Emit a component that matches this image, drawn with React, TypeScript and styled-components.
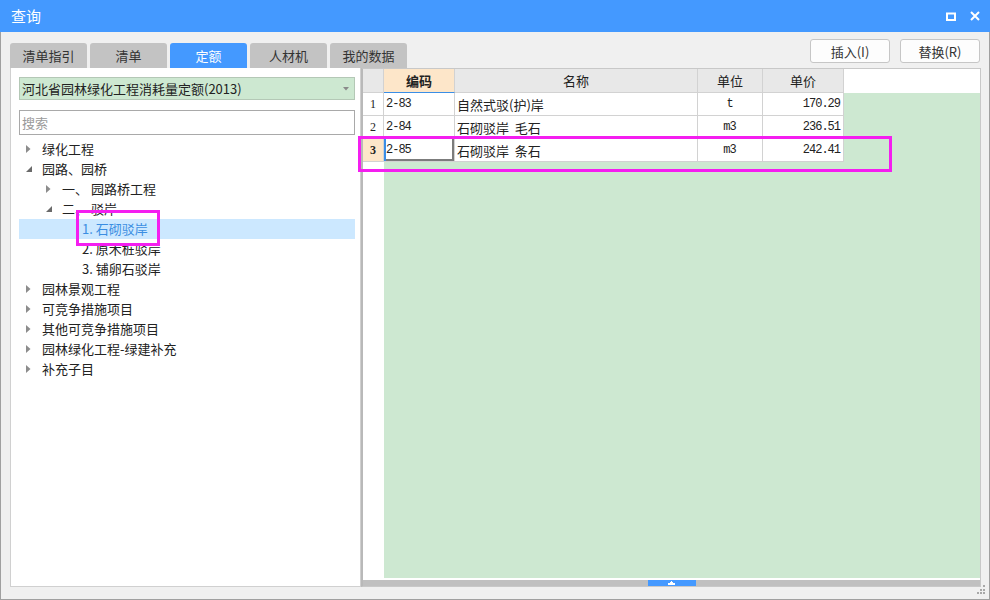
import React, { FC } from "react";
import styled, { createGlobalStyle, css } from "styled-components";

const GlobalStyle = createGlobalStyle`
  html, body {
    margin: 0;
    padding: 0;
    background: #ffffff;
  }
  * {
    box-sizing: border-box;
  }
`;

const uiFont = `"Noto Sans CJK SC", "Liberation Sans", sans-serif`;
const monoFont = `"Liberation Mono", "DejaVu Sans Mono", monospace`;

const BLUE = "#4499ff";
const GREEN = "#cde8d1";
const PEACH = "#fde6c9";
const GRID_LINE = "#d2d2d2";
const MAGENTA = "#f41ef0";

const Window = styled.div`
  position: relative;
  width: 990px;
  height: 600px;
  display: flex;
  flex-direction: column;
  background: #f0f0f0;
  border: 1px solid #a0a0a0;
  border-top: none;
  font-family: ${uiFont};
  color: #222;
`;

const TitleBar = styled.div`
  height: 32px;
  flex: none;
  display: flex;
  align-items: center;
  justify-content: space-between;
  background: ${BLUE};
  color: #fff;
  padding: 0 10px 0 11px;
  margin: 0 -1px;
`;

const Title = styled.div`
  font-size: 15px;
  line-height: 20px;
`;

const TitleButtons = styled.div`
  display: flex;
  align-items: center;
  gap: 14px;
`;

const Body = styled.div`
  flex: 1;
  display: flex;
  flex-direction: column;
  padding: 0 8px 12px 9px;
  min-height: 0;
`;

const TopRow = styled.div`
  height: 36px;
  flex: none;
  display: flex;
  justify-content: space-between;
`;

const Tabs = styled.div`
  display: flex;
  align-items: flex-end;
  gap: 3px;
`;

const Tab = styled.div<{ $active?: boolean }>`
  width: 77px;
  height: 25px;
  display: flex;
  align-items: center;
  justify-content: center;
  font-size: 13px;
  border-radius: 3px 3px 0 0;
  background: ${(p) => (p.$active ? BLUE : "#c3c3c3")};
  color: ${(p) => (p.$active ? "#fff" : "#333")};
`;

const Buttons = styled.div`
  display: flex;
  align-items: flex-end;
  gap: 10px;
  padding: 0 1px 5px 0;
`;

const Button = styled.div`
  width: 80px;
  height: 24px;
  display: flex;
  align-items: center;
  justify-content: center;
  font-size: 13px;
  color: #333;
  background: #fdfdfd;
  border: 1px solid #c6c6c6;
  border-radius: 3px;
`;

const Main = styled.div`
  flex: 1;
  display: flex;
  min-height: 0;
`;

const LeftPanel = styled.div`
  width: 351px;
  flex: none;
  display: flex;
  flex-direction: column;
  background: #fff;
  border: 1px solid #d0d0d0;
  border-top: none;
  padding: 9px 5px 0 8px;
`;

const Select = styled.div`
  height: 23px;
  display: flex;
  align-items: center;
  justify-content: space-between;
  background: ${GREEN};
  border: 1px solid #b4c8b6;
  padding: 0 5px 0 2px;
  font-size: 13px;
  line-height: 18px;
`;

const Search = styled.div`
  height: 25px;
  margin-top: 10px;
  display: flex;
  align-items: center;
  border: 1px solid #a9a9a9;
  padding-left: 2px;
  font-size: 13px;
  color: #9a9a9a;
`;

const Tree = styled.div`
  margin-top: 4px;
  display: flex;
  flex-direction: column;
`;

const TreeRow = styled.div<{ $level: number; $selected?: boolean }>`
  height: 20px;
  display: flex;
  align-items: center;
  padding-left: ${(p) => p.$level * 20}px;
  font-size: 13px;
  line-height: 18px;
  white-space: pre;
  ${(p) =>
    p.$selected &&
    css`
      background: #cce8ff;
      color: #3b8ee2;
    `}
`;

const Toggle = styled.span`
  width: 19px;
  height: 20px;
  flex: none;
  display: flex;
  align-items: center;
  justify-content: center;
`;

const TreeLabel = styled.span`
  margin-left: 4px;
`;

const RightPanel = styled.div`
  flex: 1;
  display: flex;
  flex-direction: column;
  background: #fff;
  border-top: 1px solid #c8c8c8;
  border-left: 2px solid #b9b9b9;
  border-right: 1px solid #c8c8c8;
  border-bottom: 1px solid #c8c8c8;
  min-width: 0;
`;

const GridArea = styled.div`
  flex: 1;
  display: flex;
  flex-direction: column;
  min-height: 0;
`;

const HeaderRow = styled.div`
  height: 24px;
  flex: none;
  display: flex;
`;

const DataRow = styled.div`
  height: 23px;
  flex: none;
  display: flex;
`;

const cellBase = css`
  flex: none;
  height: 100%;
  display: flex;
  align-items: center;
  border-right: 1px solid ${GRID_LINE};
  border-bottom: 1px solid ${GRID_LINE};
`;

const HeadCell = styled.div<{ $w: number; $key?: boolean }>`
  ${cellBase};
  width: ${(p) => p.$w}px;
  justify-content: center;
  font-size: 13px;
  background: ${(p) => (p.$key ? PEACH : "#e8e8e8")};
  font-weight: ${(p) => (p.$key ? 700 : 400)};
  color: #222;
  ${(p) =>
    p.$key &&
    css`
      border-bottom-color: #3a8ee6;
    `}
`;

const RowHead = styled.div<{ $current?: boolean }>`
  ${cellBase};
  width: 21px;
  justify-content: center;
  font-family: "Liberation Serif", serif;
  font-size: 12px;
  background: ${(p) => (p.$current ? PEACH : "#fff")};
  font-weight: ${(p) => (p.$current ? 700 : 400)};
`;

const Cell = styled.div<{ $w: number; $align?: "left" | "center" | "right"; $mono?: boolean; $focus?: boolean }>`
  ${cellBase};
  width: ${(p) => p.$w}px;
  padding: 0 3px 0 2px;
  white-space: pre;
  justify-content: ${(p) =>
    p.$align === "right" ? "flex-end" : p.$align === "center" ? "center" : "flex-start"};
  font-family: ${(p) => (p.$mono ? monoFont : uiFont)};
  font-size: ${(p) => (p.$mono ? "12px" : "13px")};
  letter-spacing: ${(p) => (p.$mono ? "-1px" : "0")};
  background: #fff;
  ${(p) =>
    p.$focus &&
    css`
      box-shadow: inset 2px 0 0 #3a8ee6, inset -2px -2px 0 #7c7c7c;
    `}
`;

const Fill = styled.div<{ $green?: boolean }>`
  flex: 1;
  height: 100%;
  background: ${(p) => (p.$green ? GREEN : "#fff")};
`;

const FillerRow = styled.div`
  flex: 1;
  display: flex;
  padding-bottom: 2px;
`;

const Stub = styled.div`
  width: 21px;
  flex: none;
`;

const ScrollBar = styled.div`
  height: 6px;
  flex: none;
  display: flex;
  justify-content: center;
  background: #c0c0c0;
`;

const Thumb = styled.div`
  width: 48px;
  height: 100%;
  display: flex;
  align-items: center;
  justify-content: center;
  background: ${BLUE};
`;

const Annotation = styled.div<{ $x: number; $y: number; $w: number; $h: number }>`
  position: absolute;
  left: ${(p) => p.$x}px;
  top: ${(p) => p.$y}px;
  width: ${(p) => p.$w}px;
  height: ${(p) => p.$h}px;
  border: 3px solid ${MAGENTA};
  pointer-events: none;
`;

const Grip = styled.svg`
  position: absolute;
  right: 3px;
  bottom: 4px;
`;

const Collapsed = () => (
  <svg width="5" height="8" viewBox="0 0 5 8">
    <path d="M0 0 L4.5 4 L0 8 Z" fill="#8c8c8c" />
  </svg>
);

const Expanded = () => (
  <svg width="6" height="6" viewBox="0 0 6 6">
    <path d="M6 0 L6 6 L0 6 Z" fill="#6a6a6a" />
  </svg>
);

type Node = { label: string; level: number; state?: "open" | "closed"; selected?: boolean };

const tree: Node[] = [
  { label: "绿化工程", level: 0, state: "closed" },
  { label: "园路、园桥", level: 0, state: "open" },
  { label: "一、 园路桥工程", level: 1, state: "closed" },
  { label: "二、 驳岸", level: 1, state: "open" },
  { label: "1. 石砌驳岸", level: 2, selected: true },
  { label: "2. 原木桩驳岸", level: 2 },
  { label: "3. 铺卵石驳岸", level: 2 },
  { label: "园林景观工程", level: 0, state: "closed" },
  { label: "可竞争措施项目", level: 0, state: "closed" },
  { label: "其他可竞争措施项目", level: 0, state: "closed" },
  { label: "园林绿化工程-绿建补充", level: 0, state: "closed" },
  { label: "补充子目", level: 0, state: "closed" },
];

const rows = [
  { no: "1", code: "2-83", name: "自然式驳(护)岸", unit: "t", price: "170.29" },
  { no: "2", code: "2-84", name: "石砌驳岸  毛石", unit: "m3", price: "236.51" },
  { no: "3", code: "2-85", name: "石砌驳岸  条石", unit: "m3", price: "242.41", current: true },
];

const W = { code: 71, name: 243, unit: 65, price: 81 };

const App: FC = () => (
  <>
    <GlobalStyle />
    <Window>
      <TitleBar>
        <Title>查询</Title>
        <TitleButtons>
          <svg width="10" height="9" viewBox="0 0 10 9">
            <rect x="1" y="1.5" width="8" height="6.5" fill="none" stroke="#fff" strokeWidth="2" />
          </svg>
          <svg width="10" height="10" viewBox="0 0 10 10">
            <path d="M1 1 L9 9 M9 1 L1 9" stroke="#fff" strokeWidth="2" />
          </svg>
        </TitleButtons>
      </TitleBar>
      <Body>
        <TopRow>
          <Tabs>
            <Tab>清单指引</Tab>
            <Tab>清单</Tab>
            <Tab $active>定额</Tab>
            <Tab>人材机</Tab>
            <Tab>我的数据</Tab>
          </Tabs>
          <Buttons>
            <Button>插入(I)</Button>
            <Button>替换(R)</Button>
          </Buttons>
        </TopRow>
        <Main>
          <LeftPanel>
            <Select>
              <span>河北省园林绿化工程消耗量定额(2013)</span>
              <svg width="6" height="4" viewBox="0 0 6 4">
                <path d="M0 0 L6 0 L3 3.5 Z" fill="#8a8a8a" />
              </svg>
            </Select>
            <Search>搜索</Search>
            <Tree>
              {tree.map((n) => (
                <TreeRow key={n.label} $level={n.level} $selected={n.selected}>
                  <Toggle>
                    {n.state === "closed" && <Collapsed />}
                    {n.state === "open" && <Expanded />}
                  </Toggle>
                  <TreeLabel>{n.label}</TreeLabel>
                </TreeRow>
              ))}
            </Tree>
          </LeftPanel>
          <RightPanel>
            <GridArea>
              <HeaderRow>
                <HeadCell $w={21} />
                <HeadCell $w={W.code} $key>
                  编码
                </HeadCell>
                <HeadCell $w={W.name}>名称</HeadCell>
                <HeadCell $w={W.unit}>单位</HeadCell>
                <HeadCell $w={W.price}>单价</HeadCell>
                <Fill />
              </HeaderRow>
              {rows.map((r) => (
                <DataRow key={r.no}>
                  <RowHead $current={r.current}>{r.no}</RowHead>
                  <Cell $w={W.code} $mono $focus={r.current}>
                    {r.code}
                  </Cell>
                  <Cell $w={W.name}>{r.name}</Cell>
                  <Cell $w={W.unit} $align="center" $mono>
                    {r.unit}
                  </Cell>
                  <Cell $w={W.price} $align="right" $mono>
                    {r.price}
                  </Cell>
                  <Fill $green />
                </DataRow>
              ))}
              <FillerRow>
                <Stub />
                <Fill $green />
              </FillerRow>
            </GridArea>
            <ScrollBar>
              <Thumb>
                <svg width="7" height="4" viewBox="0 0 7 4">
                  <path d="M3 0 H4 V1 H5 V2 H7 V4 H0 V2 H2 V1 H3 Z" fill="#fff" />
                </svg>
              </Thumb>
            </ScrollBar>
          </RightPanel>
        </Main>
      </Body>
      <Grip width="10" height="10" viewBox="0 0 10 10">
        <rect x="7" y="0" width="2" height="2" fill="#a8a8a8" />
        <rect x="4" y="4" width="2" height="2" fill="#a8a8a8" />
        <rect x="7" y="4" width="2" height="2" fill="#a8a8a8" />
        <rect x="1" y="7" width="2" height="2" fill="#a8a8a8" />
        <rect x="4" y="7" width="2" height="2" fill="#a8a8a8" />
        <rect x="7" y="7" width="2" height="2" fill="#a8a8a8" />
      </Grip>
      <Annotation $x={75} $y={210} $w={84} $h={36} />
      <Annotation $x={357} $y={136} $w={534} $h={36} />
    </Window>
  </>
);

export default App;
